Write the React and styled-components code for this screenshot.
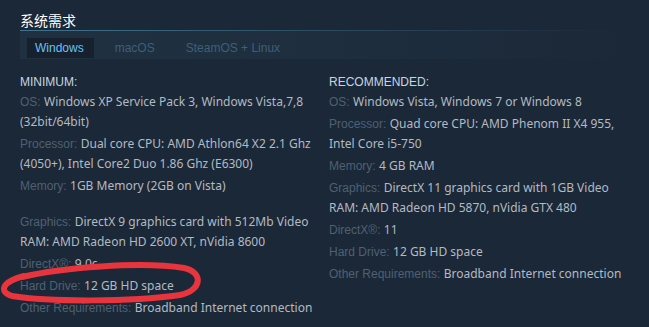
import React from "react";
import styled, { createGlobalStyle } from "styled-components";

const GlobalStyle = createGlobalStyle`
  html, body {
    margin: 0;
    padding: 0;
    background-color: #1b2838;
  }
  body {
    font-family: "Liberation Sans", Arial, sans-serif;
  }
`;

const minimum = [
  { label: "OS:", value: "Windows XP Service Pack 3, Windows Vista,7,8 (32bit/64bit)" },
  { label: "Processor:", value: "Dual core CPU: AMD Athlon64 X2 2.1 Ghz (4050+), Intel Core2 Duo 1.86 Ghz (E6300)" },
  { label: "Memory:", value: "1GB Memory (2GB on Vista)" },
  { spacer: true },
  { label: "Graphics:", value: "DirectX 9 graphics card with 512Mb Video RAM: AMD Radeon HD 2600 XT, nVidia 8600" },
  { label: "DirectX®:", value: "9.0c" },
  { label: "Hard Drive:", value: "12 GB HD space" },
  { label: "Other Requirements:", value: "Broadband Internet connection" },
];

const recommended = [
  { label: "OS:", value: "Windows Vista, Windows 7 or Windows 8" },
  { label: "Processor:", value: "Quad core CPU: AMD Phenom II X4 955, Intel Core i5-750" },
  { label: "Memory:", value: "4 GB RAM" },
  { label: "Graphics:", value: "DirectX 11 graphics card with 1GB Video RAM: AMD Radeon HD 5870, nVidia GTX 480" },
  { label: "DirectX®:", value: "11" },
  { label: "Hard Drive:", value: "12 GB HD space" },
  { label: "Other Requirements:", value: "Broadband Internet connection" },
];

const tabs = ["Windows", "macOS", "SteamOS + Linux"];

function ReqColumn({ title, items }) {
  return (
    <Column>
      <ColTitle>{title}</ColTitle>
      <ReqList>
        {items.map((item, i) =>
          item.spacer ? (
            <Spacer key={i} />
          ) : (
            <ReqItem key={i}>
              <Label>{item.label}</Label> <Value>{item.value}</Value>
            </ReqItem>
          )
        )}
      </ReqList>
    </Column>
  );
}

function App() {
  return (
    <Page>
      <GlobalStyle />
      <Title>系统需求</Title>
      <TabStrip>
        {tabs.map((t, i) => (
          <Tab key={t} $active={i === 0}>
            {t}
          </Tab>
        ))}
      </TabStrip>
      <Columns>
        <ReqColumn title="MINIMUM:" items={minimum} />
        <ReqColumn title="RECOMMENDED:" items={recommended} />
      </Columns>
      <Scribble width="649" height="327" viewBox="0 0 649 327">
        <path
          d="M 22 277 C 60 268, 140 261, 184 268 C 203 272, 203 290, 180 295 C 130 302, 50 302, 12 296 C -1 292, 1 282, 24 276"
          fill="none"
          stroke="#e8343c"
          strokeWidth="6"
          strokeLinecap="round"
        />
      </Scribble>
    </Page>
  );
}

const Page = styled.div`
  position: relative;
  width: 649px;
  height: 327px;
  overflow: hidden;
  padding: 10px 0 0 20px;
  box-sizing: border-box;
`;

const Title = styled.h2`
  margin: 0;
  font-family: "Noto Sans CJK SC", "Noto Sans", sans-serif;
  font-size: 14px;
  font-weight: 400;
  line-height: 20px;
  color: #ffffff;
  border-bottom: 1px solid transparent;
  border-image: linear-gradient(to right, #3f7592 0%, #2e5369 40%, rgba(27, 40, 56, 0) 95%) 1;
`;

const TabStrip = styled.div`
  display: flex;
  align-items: flex-end;
  height: 28px;
  width: 610px;
  padding-left: 7px;
  gap: 13px;
  box-sizing: border-box;
  background: linear-gradient(to right, #1f3140 0%, #1e2e3e 50%, rgba(27, 40, 56, 0) 100%);
`;

const Tab = styled.div`
  height: 20px;
  margin-bottom: 1px;
  padding: 0 10px 0 8px;
  font-size: 12px;
  line-height: 20px;
  color: ${(p) => (p.$active ? "#67c1f5" : "#3d5f7b")};
  background: ${(p) => (p.$active ? "#16212d" : "transparent")};
`;

const Columns = styled.div`
  display: grid;
  grid-template-columns: 300px 300px;
  column-gap: 9px;
  padding-top: 13px;
`;

const Column = styled.div`
  display: flex;
  flex-direction: column;
`;

const ColTitle = styled.div`
  font-size: 12px;
  line-height: 20px;
  color: #c7d5e0;
`;

const ReqList = styled.ul`
  margin: 0;
  padding: 0;
  list-style: none;
  display: flex;
  flex-direction: column;
  gap: 2px;
`;

const ReqItem = styled.li`
  line-height: 20px;
  font-size: 12px;
`;

const Spacer = styled.li`
  height: 12px;
`;

const Label = styled.span`
  font-family: "Liberation Sans", Arial, sans-serif;
  font-size: 12px;
  color: #4e6171;
`;

const Value = styled.span`
  font-family: "Noto Sans", "Liberation Sans", sans-serif;
  font-size: 12px;
  color: #b3bac1;
`;

const Scribble = styled.svg`
  position: absolute;
  left: 0;
  top: 0;
  pointer-events: none;
`;

export default App;
